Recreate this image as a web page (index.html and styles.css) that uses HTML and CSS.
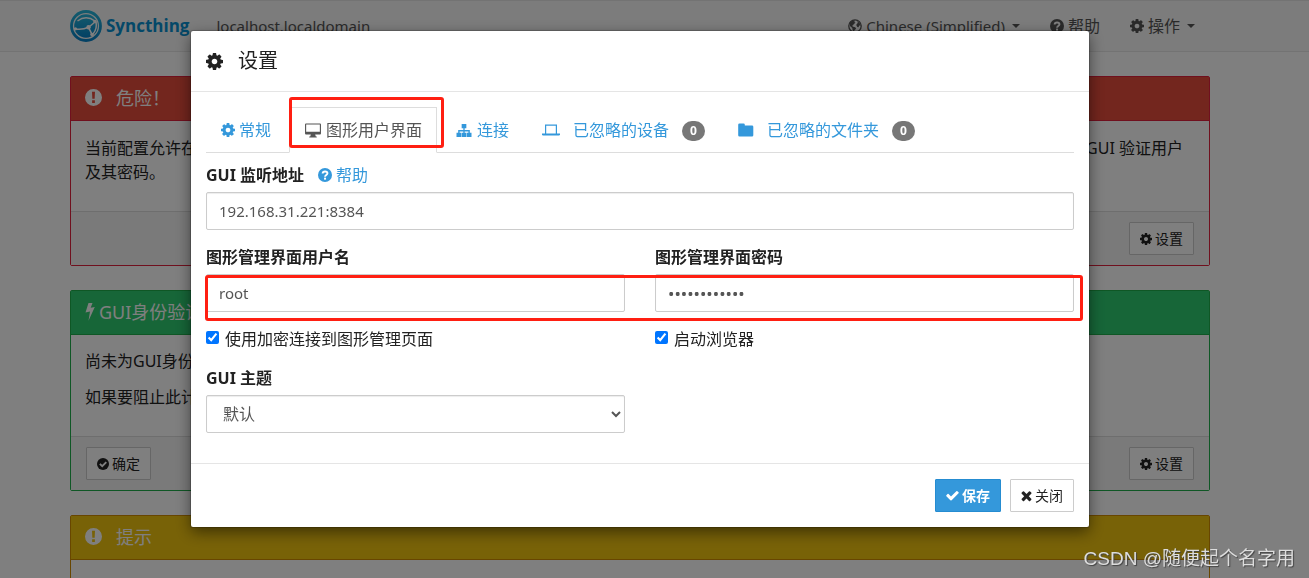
FILE: index.html
```html
<!DOCTYPE html>
<html lang="zh-CN">
<head>
<meta charset="utf-8">
<title>Syncthing</title>
<link rel="stylesheet" href="styles.css">
</head>
<body>
<svg class="sprite" aria-hidden="true">
  <defs>
    <linearGradient id="brand" x1="0" y1="0" x2="0" y2="1"><stop offset="0" stop-color="#26b6db"/><stop offset="1" stop-color="#0882c8"/></linearGradient>
  </defs>
  <symbol id="cog" viewBox="128 128 1536 1536"><path d="M1152 896q0-106-75-181t-181-75-181 75-75 181 75 181 181 75 181-75 75-181zm512-109v222q0 12-8 23t-20 13l-185 28q-19 54-39 91 35 50 107 138 10 12 10 25t-9 23q-27 37-99 108t-94 71q-12 0-26-9l-138-108q-44 23-91 38-16 136-29 186-7 28-36 28h-222q-14 0-24.500-8.500t-11.500-21.500l-28-184q-49-16-90-37l-141 107q-10 9-25 9-14 0-25-11-126-114-165-168-7-10-7-23 0-12 8-23 15-21 51-66.500t54-70.500q-27-50-41-99l-183-27q-13-2-21-12.500t-8-23.500v-222q0-12 8-23t19-13l186-28q14-46 39-92-40-57-107-138-10-12-10-24 0-10 9-23 26-36 98.500-107.500t94.500-71.500q13 0 26 10l138 107q44-23 91-38 16-136 29-186 7-28 36-28h222q14 0 24.500 8.500t11.500 21.500l28 184q49 16 90 37l142-107q9-9 24-9 13 0 25 10 129 119 165 170 7 8 7 22 0 12-8 23-15 21-51 66.500t-54 70.500q26 50 41 98l183 28q13 2 21 12.500t8 23.500z"/></symbol>
  <symbol id="check" viewBox="100 100 1600 1600"><path d="M1671 566q0 40-28 68l-724 724-136 136q-28 28-68 28t-68-28l-136-136-362-362q-28-28-28-68t28-68l136-136q28-28 68-28t68 28l294 295 656-657q28-28 68-28t68 28l136 136q28 28 28 68z"/></symbol>
  <symbol id="times" viewBox="240 240 1312 1400"><path d="M1490 1322q0 40-28 68l-136 136q-28 28-68 28t-68-28l-294-294-294 294q-28 28-68 28t-68-28l-136-136q-28-28-28-68t28-68l294-294-294-294q-28-28-28-68t28-68l136-136q28-28 68-28t68 28l294 294 294-294q28-28 68-28t68 28l136 136q28 28 28 68t-28 68l-294 294 294 294q28 28 28 68z"/></symbol>
  <symbol id="alert" viewBox="0 0 16 16"><path fill-rule="evenodd" d="M8 0a8 8 0 1 1 0 16A8 8 0 0 1 8 0zM6.600 2.700l.3 6.500h2.200l.3-6.500zM6.700 10.700v2.500h2.600v-2.500z"/></symbol>
  <symbol id="help" viewBox="0 0 16 16"><circle cx="8" cy="8" r="8"/><path d="M5.300 6.200C5.400 3.400 10.800 3.100 10.800 6.100 10.800 8 8.100 8 8.100 9.900" fill="none" stroke="var(--hole)" stroke-width="2.200"/><path d="M6.900 11h2.300v2.300H6.900z" fill="var(--hole)"/></symbol>
  <symbol id="ok" viewBox="0 0 16 16"><circle cx="8" cy="8" r="8"/><path d="M3.800 7.800l3.200 3.200 5.400-5.400" fill="none" stroke="var(--hole)" stroke-width="2.500"/></symbol>
  <symbol id="globe" viewBox="0 0 16 16"><circle cx="8" cy="8" r="7.100" fill="none" stroke="currentColor" stroke-width="1.500"/><path d="M2 4l3-2.400 3 .2-.8 1.700 1.400.9-1.900 1.400-1.100 1.700-1.200.1 1.500 1.200 2.400.6 1 1.600-1.900 1.800-.5 2.100-1.700-2.200-.3-2.300-2.700-2.500zM10 2.300l3.200 2 1.400 3.500-1.800-.5-.7 2-1.500-.3-1.200-2.200 1-1.700 1-.4z"/></symbol>
  <symbol id="bolt" viewBox="0 0 10 18"><path d="M3.500 0h4L5.700 4.800 9.800 4 3.500 17.800 5 8.600.5 9.600z"/></symbol>
  <symbol id="screen" viewBox="0 0 18 16"><path fill-rule="evenodd" d="M1.500.5h15a1 1 0 0 1 1 1v9.800a1 1 0 0 1-1 1h-5.200l.7 2.200h1v1H5v-1h1l.7-2.200H1.500a1 1 0 0 1-1-1V1.500a1 1 0 0 1 1-1zm.2 1.200v7.600h14.600V1.700z"/></symbol>
  <symbol id="sitemap" viewBox="0 0 17 16"><path d="M6 1h5v4.500H9.200v2h5.500v3H16.500V15h-5v-4.500h1.700V9h-4v1.500H11V15H6v-4.500h1.800V9h-4v1.500h1.700V15h-5v-4.500h1.800v-3h5.500v-2H6z"/></symbol>
  <symbol id="laptop" viewBox="0 0 18 14"><path fill-rule="evenodd" d="M3 1h12v9h3v1.200c0 .5-.8.8-1.500.8h-15C.8 12 0 11.700 0 11.200V10h3zm1.200 1.200V10h9.600V2.200z"/></symbol>
  <symbol id="folder" viewBox="0 0 16 14"><path d="M1.500.5h4a1.300 1.300 0 0 1 1.300 1.300V2.500h7.200a1.300 1.300 0 0 1 1.300 1.300v8.400a1.300 1.300 0 0 1-1.300 1.300H1.500A1.300 1.300 0 0 1 .2 12.200V1.800A1.300 1.300 0 0 1 1.500.5z"/></symbol>
  <symbol id="logo" viewBox="0 0 32 32"><circle cx="16" cy="16" r="14.500" fill="none" stroke="url(#brand)" stroke-width="2.800"/><circle cx="16" cy="16" r="11.800" fill="url(#brand)"/><g fill="none" stroke="#fff" stroke-width="1.500"><path d="M5.500 19q7 1 13-1.700l6.500-5.300M18.500 17.300l3.500 7"/><path d="M7.500 11q8.500-6.500 17.500 0M26 12q1.500 6.500-3 12"/></g><g fill="#fff"><circle cx="18.500" cy="17.300" r="2.200"/><circle cx="25" cy="11.500" r="1.800"/><circle cx="22" cy="24.500" r="1.800"/><circle cx="5.500" cy="18.800" r="1.600"/></g></symbol>
</svg>

<nav class="navbar">
  <div class="container navbar-row">
    <a class="brand" href="#"><svg class="logo"><use href="#logo"/></svg>Syncthing</a>
    <span class="host">localhost.localdomain</span>
    <div class="menu">
      <a href="#"><svg class="icon"><use href="#globe"/></svg><span class="latin">Chinese (Simplified)</span><i class="caret"></i></a>
      <a href="#"><svg class="icon"><use href="#help"/></svg>帮助</a>
      <a href="#"><svg class="icon"><use href="#cog"/></svg>操作<i class="caret"></i></a>
    </div>
  </div>
</nav>

<main class="container">
  <section class="panel danger">
    <h3><svg class="icon-lg"><use href="#alert"/></svg><span class="title-gap">危险！</span></h3>
    <div class="panel-body"><p class="split"><span>当前配置允许在</span><span>GUI 验证用户</span></p><p>及其密码。</p></div>
    <div class="panel-footer end"><button class="btn"><svg><use href="#cog"/></svg>设置</button></div>
  </section>
  <section class="panel success">
    <h3><svg class="icon-bolt"><use href="#bolt"/></svg>GUI身份验证</h3>
    <div class="panel-body spaced"><p>尚未为GUI身份</p><p>如果要阻止此计</p></div>
    <div class="panel-footer"><button class="btn"><svg><use href="#ok"/></svg>确定</button><button class="btn"><svg><use href="#cog"/></svg>设置</button></div>
  </section>
  <section class="panel warning">
    <h3><svg class="icon-lg"><use href="#alert"/></svg><span class="title-gap">提示</span></h3>
    <div class="panel-body"></div>
  </section>
</main>

<div class="backdrop">
  <div class="modal" role="dialog" aria-labelledby="dialog-title">
    <header class="modal-header"><svg class="icon-lg"><use href="#cog"/></svg><h4 id="dialog-title">设置</h4></header>
    <div class="modal-body">
      <ul class="tabs">
        <li><a href="#"><svg class="icon"><use href="#cog"/></svg>常规</a></li>
        <li class="active"><a href="#"><svg class="icon-wide"><use href="#screen"/></svg>图形用户界面</a><div class="mark mark-tab"></div></li>
        <li><a href="#"><svg class="icon-wide"><use href="#sitemap"/></svg>连接</a></li>
        <li><a href="#" class="loose"><svg class="icon-wide"><use href="#laptop"/></svg>已忽略的设备<span class="badge">0</span></a></li>
        <li><a href="#" class="loose"><svg class="icon-folder"><use href="#folder"/></svg>已忽略的文件夹<span class="badge">0</span></a></li>
      </ul>
      <form>
        <div class="field">
          <div class="label-row"><label for="addr">GUI 监听地址</label><a href="#"><svg class="icon"><use href="#help"/></svg>帮助</a></div>
          <input class="control" id="addr" type="text" value="192.168.31.221:8384">
        </div>
        <div class="columns">
          <div class="mark mark-row"></div>
          <div class="field"><div class="label-row"><label for="user">图形管理界面用户名</label></div><input class="control" id="user" type="text" value="root"></div>
          <div class="field"><div class="label-row"><label for="pass">图形管理界面密码</label></div><input class="control" id="pass" type="password" value="············"></div>
        </div>
        <div class="columns">
          <div class="check"><input type="checkbox" id="tls" checked><label for="tls">使用加密连接到图形管理页面</label></div>
          <div class="check"><input type="checkbox" id="start" checked><label for="start">启动浏览器</label></div>
        </div>
        <div class="columns">
          <div class="field"><div class="label-row"><label for="theme">GUI 主题</label></div><select class="control" id="theme"><option>默认</option></select></div>
        </div>
      </form>
    </div>
    <footer class="modal-footer"><button class="btn primary"><svg><use href="#check"/></svg>保存</button><button class="btn"><svg class="small"><use href="#times"/></svg>关闭</button></footer>
  </div>
</div>
<div class="watermark">CSDN @随便起个名字用</div>
</body>
</html>
```
FILE: styles.css
```css
* { box-sizing: border-box; }
html, body { height: 100%; }
body {
  --hole: #fff;
  margin: 0;
  overflow: hidden;
  background: #fff;
  color: #222;
  font: 16px/24px "Noto Sans", "Noto Sans CJK SC", sans-serif;
}
a { color: #3498db; text-decoration: none; }
p, h3, h4, ul { margin: 0; padding: 0; font-weight: 400; }
svg { fill: currentColor; flex: none; }
.sprite { position: absolute; width: 0; height: 0; }
.icon { width: 14px; height: 14px; }
.icon-wide { width: 18px; height: 15px; }
.icon-folder { width: 16px; height: 14px; }
.icon-lg { width: 17px; height: 17px; }
.icon-bolt { width: 10px; height: 18px; }

.container { max-width: 1140px; margin: 0 auto; }
.navbar, main, .backdrop { padding-right: 29px; }
main.container { max-width: 1169px; }

.navbar { background: #f8f8f8; border: solid #e7e7e7; border-width: 1px 0; height: 52px; margin-bottom: 24px; }
.navbar-row { display: flex; align-items: center; height: 50px; }
.brand { display: flex; align-items: center; gap: 4px; color: #0891d1; font: 700 17px/24px "Open Sans", sans-serif; }
.logo { width: 32px; height: 32px; }
.host { margin-left: 27px; font-size: 15px; color: #555; }
.menu { display: flex; gap: 30px; margin-left: auto; padding-right: 15px; }
.menu a { display: flex; align-items: center; gap: 4px; color: #555; }
.latin { font-size: 15px; }
.caret { margin-left: 3px; border: 4px solid transparent; border-top-color: currentColor; border-bottom: 0; }

.panel { border: 1px solid var(--edge); border-radius: 2px; margin-bottom: 24px; }
.panel h3 { display: flex; align-items: center; gap: 4px; height: 44px; padding: 0 14px 2px; font-size: 18px; color: #fff; background: var(--fill); border-bottom: 1px solid var(--edge); }
.title-gap { margin-left: 10px; }
.danger { --fill: #e74c3c; --edge: #e0203c; }
.success { --fill: #2ecc71; --edge: #1fae4a; }
.warning { --fill: #f1c40f; --edge: #d08c00; }
.panel-body { padding: 15px 14px 27px; min-height: 90px; }
.panel-body.spaced { display: grid; gap: 12px; padding: 14px 14px 27px; }
.split { display: flex; justify-content: space-between; padding-right: 12px; }
.panel-footer { display: flex; justify-content: space-between; padding: 10px 15px; background: #f5f5f5; border-top: 1px solid #ddd; }
.panel-footer.end { justify-content: flex-end; }

.btn { display: inline-flex; align-items: center; gap: 3px; height: 33px; padding: 0 10px; border: 1px solid #ccc; border-radius: 1px; background: #fff; color: #222; font: 14px/20px "Noto Sans", "Noto Sans CJK SC", sans-serif; }
.btn svg { width: 12px; height: 12px; }
.btn svg.small { width: 11px; }
.btn.primary { background: #3498db; border-color: #258cd1; color: #fff; font-weight: 700; }
.btn.primary svg { width: 13px; height: 13px; }

.backdrop { position: fixed; inset: 0; padding-top: 31px; background: rgba(0, 0, 0, .5); }
.modal { max-width: 898px; margin: 0 auto; background: #fff; border-radius: 2px; box-shadow: 0 5px 15px rgba(0, 0, 0, .5), 0 0 1px 1px rgba(0, 0, 0, .2); }
.modal-header { display: flex; align-items: center; gap: 15px; height: 61px; padding: 0 15px; border-bottom: 1px solid #e5e5e5; }
.modal-header h4 { font-size: 20px; }
.modal-body { padding: 15px; }
.tabs { display: flex; gap: 3px; list-style: none; border-bottom: 1px solid #ddd; }
.tabs li { position: relative; margin-bottom: -1px; }
.tabs a { display: flex; align-items: center; gap: 4px; height: 46px; padding: 0 14px; border: 1px solid transparent; }
.tabs a.loose { gap: 13px; }
.tabs .active a { color: #555; border-color: #ddd #ddd #fff; background: #fff; }
.badge { margin-top: 2px; padding: 0 8px; border-radius: 10px; background: #777; color: #fff; font-size: 12px; font-weight: 700; line-height: 20px; }
.mark { position: absolute; border: 3px solid #ff1f12; border-radius: 3px; pointer-events: none; }
.mark-tab { inset: -10px -7px 5px 0; }
.mark-row { inset: 30px -9px -9px -1px; }

form { display: grid; gap: 15px; padding: 10px 0 15px; }
.columns { position: relative; display: grid; grid-template-columns: 1fr 1fr; gap: 30px; }
.label-row { display: flex; gap: 14px; margin-bottom: 5px; }
.label-row label { font-size: 16px; font-weight: 700; }
.label-row a { display: flex; align-items: center; gap: 4px; }
.control { display: block; width: 100%; height: 38px; padding: 0 12px; border: 1px solid #ccc; border-radius: 2px; background: #fff; color: #555; font: 15px/24px "Noto Sans", "Noto Sans CJK SC", sans-serif; box-shadow: inset 0 1px 1px rgba(0, 0, 0, .075); }
.control[type="password"] { font-size: 17px; }
select.control { font-size: 16px; padding-right: 0; }
.check { display: flex; gap: 6px; align-items: center; }
.check input { width: 13px; height: 13px; margin: 0 0 3px; }
.modal-footer { display: flex; justify-content: flex-end; gap: 9px; padding: 15px; border-top: 1px solid #e5e5e5; }

.watermark { position: fixed; right: 14px; bottom: 5px; color: #ddd; font: 19px/28px "Liberation Sans", "Noto Sans CJK SC", sans-serif; text-shadow: 1px 1px 1px #444; }
```
